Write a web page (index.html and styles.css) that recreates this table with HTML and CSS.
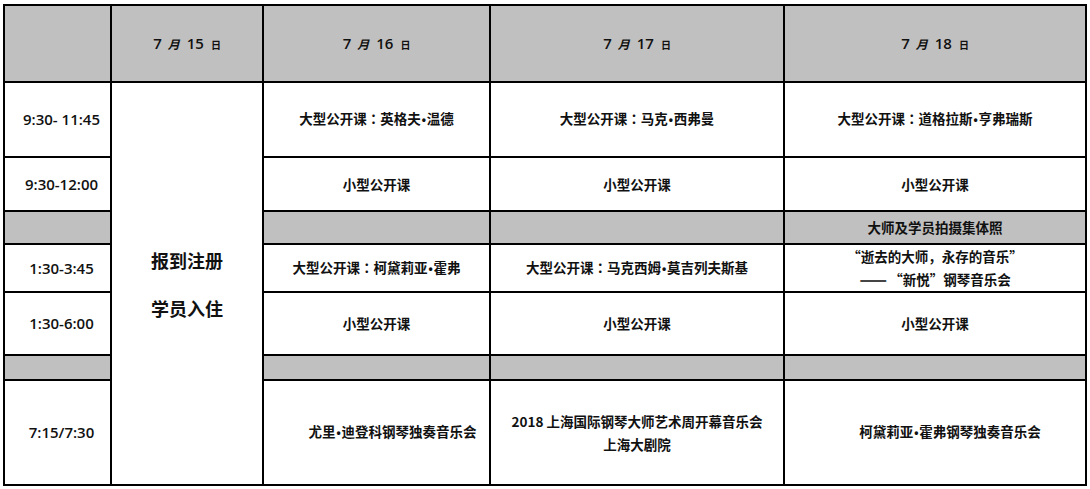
FILE: index.html
```html
<!DOCTYPE html>
<html lang="zh-CN">
<head>
<meta charset="utf-8">
<title>日程表</title>
<link rel="stylesheet" href="styles.css">
</head>
<body>
<table class="schedule">
  <colgroup>
    <col class="c-time">
    <col class="c-d15">
    <col class="c-d16">
    <col class="c-d17">
    <col class="c-d18">
  </colgroup>
  <tr class="r-head gray">
    <td></td>
    <td class="date"><span class="num">7</span><span class="yue">月</span><span class="num">15</span><span class="ri">日</span></td>
    <td class="date"><span class="num">7</span><span class="yue">月</span><span class="num">16</span><span class="ri">日</span></td>
    <td class="date"><span class="num">7</span><span class="yue">月</span><span class="num">17</span><span class="ri">日</span></td>
    <td class="date"><span class="num">7</span><span class="yue">月</span><span class="num">18</span><span class="ri">日</span></td>
  </tr>
  <tr class="r1">
    <td class="time">9:30- 11:45</td>
    <td class="reg" rowspan="8"><div class="reg-line">报到注册</div><div class="reg-line">学员入住</div></td>
    <td>大型公开课<span class="colon" lang="ja">：</span>英格夫<span class="dot">•</span>温德</td>
    <td>大型公开课<span class="colon" lang="ja">：</span>马克<span class="dot">•</span>西弗曼</td>
    <td>大型公开课<span class="colon" lang="ja">：</span>道格拉斯<span class="dot">•</span>亨弗瑞斯</td>
  </tr>
  <tr class="r2">
    <td class="time">9:30-12:00</td>
    <td>小型公开课</td>
    <td>小型公开课</td>
    <td>小型公开课</td>
  </tr>
  <tr class="r3 gray">
    <td></td>
    <td></td>
    <td></td>
    <td>大师及学员拍摄集体照</td>
  </tr>
  <tr class="r4">
    <td class="time">1:30-3:45</td>
    <td>大型公开课<span class="colon" lang="ja">：</span>柯黛莉亚<span class="dot">•</span>霍弗</td>
    <td>大型公开课<span class="colon" lang="ja">：</span>马克西姆<span class="dot">•</span>莫吉列夫斯基</td>
    <td class="two">“逝去的大师，永存的音乐”<br><span class="dash">——</span>“新悦”钢琴音乐会</td>
  </tr>
  <tr class="r5">
    <td class="time">1:30-6:00</td>
    <td>小型公开课</td>
    <td>小型公开课</td>
    <td>小型公开课</td>
  </tr>
  <tr class="r6 gray">
    <td></td>
    <td></td>
    <td></td>
    <td></td>
  </tr>
  <tr class="r7">
    <td class="time">7:15/7:30</td>
    <td class="shift16">尤里<span class="dot">•</span>迪登科钢琴独奏音乐会</td>
    <td class="two">2018 上海国际钢琴大师艺术周开幕音乐会<br>上海大剧院</td>
    <td class="shift18">柯黛莉亚<span class="dot">•</span>霍弗钢琴独奏音乐会</td>
  </tr>
</table>
</body>
</html>
```
FILE: styles.css
```css
html, body {
  margin: 0;
  padding: 0;
  background: #ffffff;
}

body {
  font-family: "Noto Sans CJK SC", "Noto Sans", sans-serif;
  color: #111111;
}

.schedule {
  border-collapse: collapse;
  table-layout: fixed;
  margin: 4px 0 0 3px;
  width: 1084px;
}

.c-time { width: 107px; }
.c-d15 { width: 152px; }
.c-d16 { width: 227px; }
.c-d17 { width: 294px; }
.c-d18 { width: 302px; }

.schedule td {
  border: 2px solid #000000;
  padding: 0;
  text-align: center;
  vertical-align: middle;
  font-size: 13.5px;
  font-weight: 700;
  line-height: 23px;
  white-space: nowrap;
}

.gray td {
  background: #c0c0c0;
}

.r-head { height: 77px; }
.r1 { height: 75px; }
.r2 { height: 54px; }
.r3 { height: 33px; }
.r4 { height: 48px; }
.r5 { height: 63px; }
.r6 { height: 25px; }
.r7 { height: 105px; }

.date .num {
  font-family: "Open Sans", "Noto Sans", sans-serif;
  font-size: 15px;
  font-weight: 600;
}

.date .yue {
  font-family: "Noto Sans CJK SC", sans-serif;
  font-size: 12px;
  font-weight: 700;
  font-style: italic;
  margin: 0 7px 0 6px;
}

.date .ri {
  font-family: "Noto Sans CJK SC", sans-serif;
  font-size: 10px;
  font-weight: 700;
  margin-left: 7px;
}

.schedule td.time {
  font-family: "Open Sans", "Noto Sans", sans-serif;
  font-size: 15px;
  font-weight: 600;
  padding-left: 8px;
}

.reg {
  padding-bottom: 22px;
}

.reg-line {
  font-size: 18px;
  font-weight: 700;
  line-height: 26px;
}

.reg-line + .reg-line {
  margin-top: 22px;
}

.colon {
  font-family: "Noto Sans CJK JP", sans-serif;
}

.dot {
  font-family: "Liberation Sans", sans-serif;
  font-size: 12px;
  margin: 0 1px;
}

.dash {
  font-family: "Noto Sans CJK SC", sans-serif;
  font-size: 14px;
  letter-spacing: -1px;
  margin-right: 3px;
  text-shadow: 0 1px 0 #111111;
}

.schedule td.shift16 {
  padding-left: 32px;
}

.schedule td.shift18 {
  padding-left: 30px;
}
```
